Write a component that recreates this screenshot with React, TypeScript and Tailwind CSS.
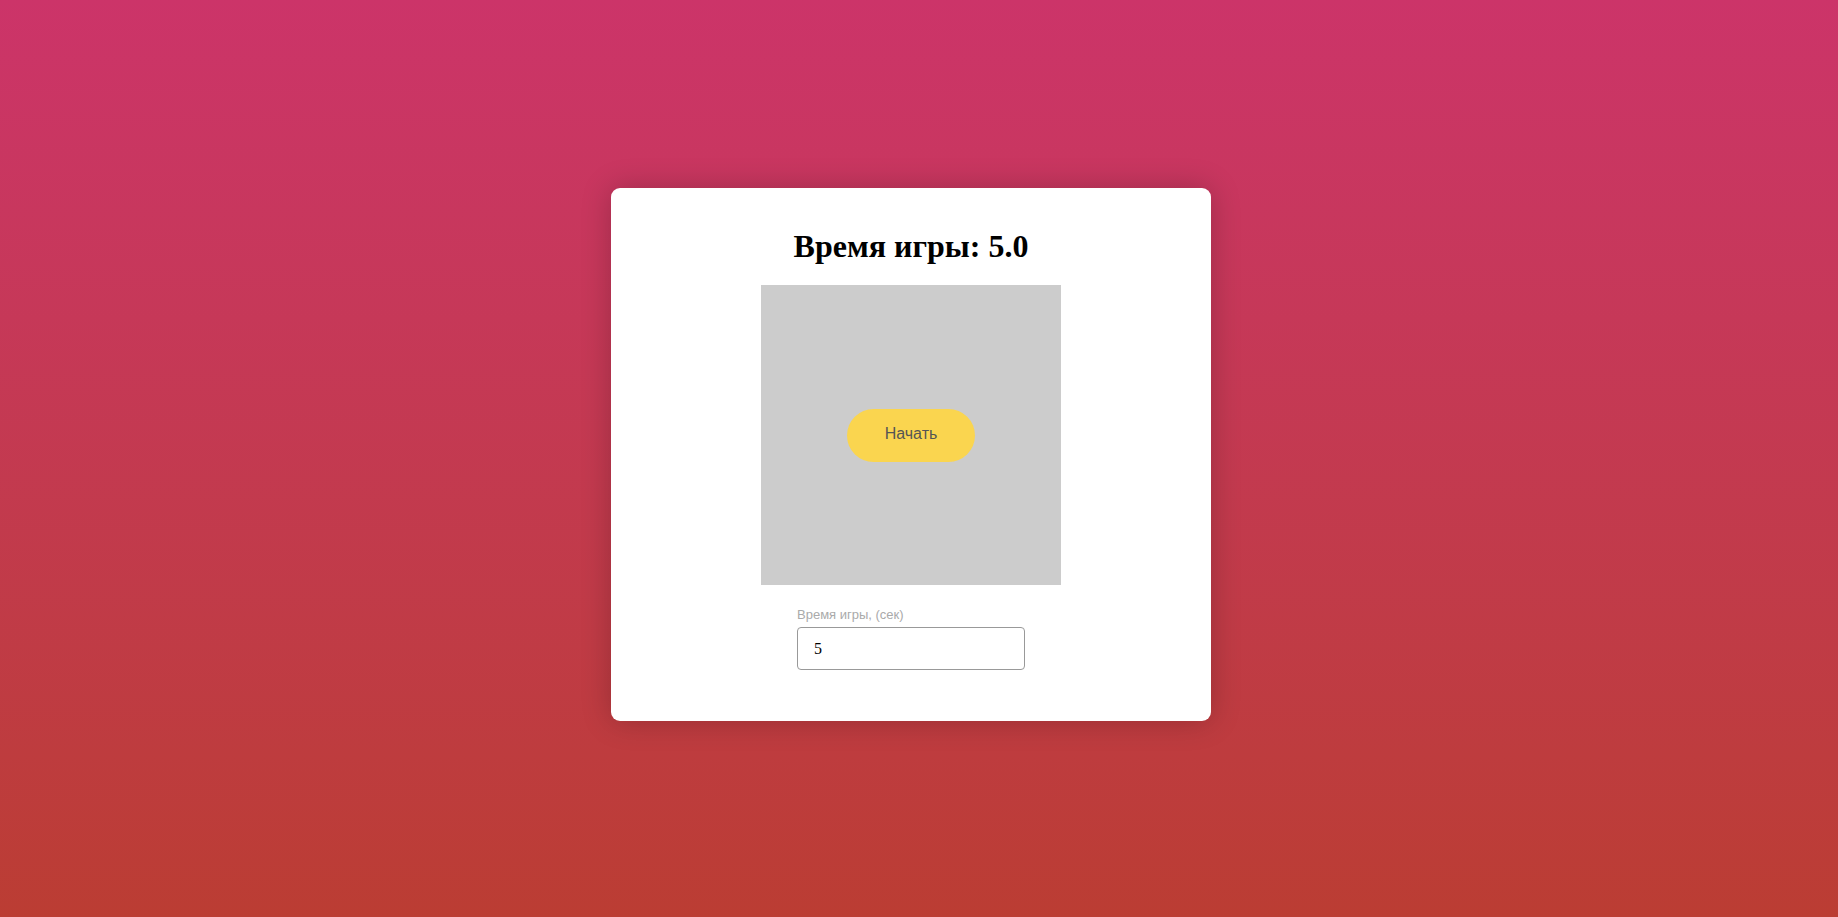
import React, { useState } from 'react';

export default function App() {
  const [time, setTime] = useState('5');
  const seconds = Number(time) || 0;

  return (
    <div className="min-h-screen w-full flex items-center justify-center pr-[16px] pb-[8px] bg-gradient-to-b from-[#cc3469] to-[#bb3d33]">
      <div className="w-[600px] h-[533px] bg-white rounded-[9px] shadow-[0_0_30px_rgba(0,0,0,0.22)] flex flex-col items-center pt-[40px]">
        <h1 className="font-['Liberation_Serif',serif] font-bold text-[32px] leading-[37px] text-black">
          Время игры: {seconds.toFixed(1)}
        </h1>
        <div className="mt-[20px] w-[300px] h-[300px] bg-[#cccccc] flex items-center justify-center">
          <button className="w-[128px] h-[53px] pb-[2px] rounded-full bg-[#fad54f] font-['Liberation_Sans',Arial,sans-serif] text-[16px] text-[#555]">
            Начать
          </button>
        </div>
        <div className="mt-[22px] w-[228px] flex flex-col">
          <label className="font-['Liberation_Sans',Arial,sans-serif] text-[13px] leading-[15px] text-[#aaaaaa]">
            Время игры, (сек)
          </label>
          <input
            type="number"
            value={time}
            onChange={(e) => setTime(e.target.value)}
            className="mt-[5px] w-[228px] h-[43px] border border-[#999] rounded-[4px] px-[16px] font-['Liberation_Serif',serif] text-[16px] text-black outline-none [appearance:textfield] [&::-webkit-inner-spin-button]:appearance-none [&::-webkit-outer-spin-button]:appearance-none"
          />
        </div>
      </div>
    </div>
  );
}
